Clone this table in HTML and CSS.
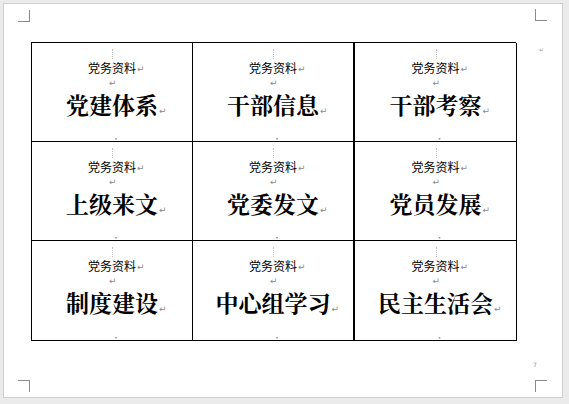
FILE: index.html
```html
<!DOCTYPE html>
<html lang="zh">
<head>
<meta charset="utf-8">
<title>党务资料</title>
<link rel="stylesheet" href="styles.css">
</head>
<body>
<div class="page">
  <span class="crop crop-tl"></span>
  <span class="crop crop-tr"></span>
  <span class="crop crop-bl"></span>
  <span class="crop crop-br"></span>
  <span class="side-mark">·↵</span>
  <span class="page-num">7</span>
  <div class="grid">
    <div class="cell c1"><span class="dots"></span><p class="sub"><span class="t">党务资料<i class="pm">↵</i></span></p><p class="blank"><span class="t"><i class="pm">↵</i></span></p><p class="title"><span class="t">党建体系<i class="pm">↵</i></span></p><span class="end">·</span></div>
    <div class="cell c2"><span class="dots"></span><p class="sub"><span class="t">党务资料<i class="pm">↵</i></span></p><p class="blank"><span class="t"><i class="pm">↵</i></span></p><p class="title"><span class="t">干部信息<i class="pm">↵</i></span></p><span class="end">·</span></div>
    <div class="cell c3"><span class="dots"></span><p class="sub"><span class="t">党务资料<i class="pm">↵</i></span></p><p class="blank"><span class="t"><i class="pm">↵</i></span></p><p class="title"><span class="t">干部考察<i class="pm">↵</i></span></p><span class="end">·</span></div>
    <div class="cell c1"><span class="dots"></span><p class="sub"><span class="t">党务资料<i class="pm">↵</i></span></p><p class="blank"><span class="t"><i class="pm">↵</i></span></p><p class="title"><span class="t">上级来文<i class="pm">↵</i></span></p><span class="end">·</span></div>
    <div class="cell c2"><span class="dots"></span><p class="sub"><span class="t">党务资料<i class="pm">↵</i></span></p><p class="blank"><span class="t"><i class="pm">↵</i></span></p><p class="title"><span class="t">党委发文<i class="pm">↵</i></span></p><span class="end">·</span></div>
    <div class="cell c3"><span class="dots"></span><p class="sub"><span class="t">党务资料<i class="pm">↵</i></span></p><p class="blank"><span class="t"><i class="pm">↵</i></span></p><p class="title"><span class="t">党员发展<i class="pm">↵</i></span></p><span class="end">·</span></div>
    <div class="cell c1 last"><span class="dots"></span><p class="sub"><span class="t">党务资料<i class="pm">↵</i></span></p><p class="blank"><span class="t"><i class="pm">↵</i></span></p><p class="title"><span class="t">制度建设<i class="pm">↵</i></span></p><span class="end">·</span></div>
    <div class="cell c2 last"><span class="dots"></span><p class="sub"><span class="t">党务资料<i class="pm">↵</i></span></p><p class="blank"><span class="t"><i class="pm">↵</i></span></p><p class="title"><span class="t">中心组学习<i class="pm">↵</i></span></p><span class="end">·</span></div>
    <div class="cell c3 last"><span class="dots"></span><p class="sub"><span class="t">党务资料<i class="pm">↵</i></span></p><p class="blank"><span class="t"><i class="pm">↵</i></span></p><p class="title"><span class="t">民主生活会<i class="pm">↵</i></span></p><span class="end">·</span></div>
  </div>
</div>
</body>
</html>
```

FILE: styles.css
```css
* { box-sizing: border-box; }
html, body { margin: 0; padding: 0; }
body {
  background: #ebebeb;
  width: 569px;
  height: 404px;
  padding: 3px 0 0 3px;
  font-family: "Noto Sans CJK SC", "DejaVu Sans", sans-serif;
  overflow: hidden;
}
.page {
  position: relative;
  width: 560px;
  height: 395px;
  background: #ffffff;
  border: 1px solid #cfcfcf;
  padding: 38px 0 0 27px;
}
.crop { position: absolute; width: 12px; height: 12px; }
.crop-tl { left: 14px; top: 6px; border-right: 1px solid #8a8a8a; border-bottom: 1px solid #8a8a8a; }
.crop-tr { left: 531px; top: 5px; border-left: 1px solid #8a8a8a; border-bottom: 1px solid #8a8a8a; }
.crop-bl { left: 14px; top: 376px; border-right: 1px solid #8a8a8a; border-top: 1px solid #8a8a8a; }
.crop-br { left: 531px; top: 376px; border-left: 1px solid #8a8a8a; border-top: 1px solid #8a8a8a; }
.side-mark {
  position: absolute; left: 533px; top: 42px;
  font-family: "DejaVu Sans", sans-serif; font-size: 6px; color: #a0a0a0;
}
.page-num {
  position: absolute; left: 529px; top: 357px;
  font-family: "DejaVu Sans", sans-serif; font-size: 6px; color: #909090;
}
.grid {
  display: grid;
  grid-template-columns: 161px 162px 162px;
  grid-template-rows: 99px 99px 100px;
  width: 485px;
  border-top: 1px solid #000;
  border-left: 1px solid #000;
}
.cell {
  position: relative;
  border-right: 1px solid #000;
  border-bottom: 1px solid #000;
  display: flex;
  flex-direction: column;
  padding-top: 18px;
}
.cell.c2 { border-right: 2px solid #000; }
.cell p { margin: 0; text-align: center; }
.t { position: relative; display: inline-block; }
.sub { height: 14px; font-size: 12px; line-height: 14px; color: #000; }
.blank { height: 12px; line-height: 12px; }
.title {
  height: 36px;
  line-height: 36px;
  font-family: "Noto Serif CJK SC", "Noto Sans CJK SC", serif;
  font-weight: 700;
  font-size: 23px;
  color: #000;
}
.pm {
  position: absolute;
  left: 100%;
  bottom: 0;
  font-style: normal;
  font-weight: 400;
  font-family: "DejaVu Sans", sans-serif;
  font-size: 9px;
  line-height: 10px;
  color: #8a8a8a;
  margin-left: 1px;
}
.sub .pm { bottom: 1px; }
.blank .t { width: 0; height: 12px; }
.blank .pm { left: -4px; }
.title .pm { bottom: 7px; }
.dots {
  position: absolute;
  left: 50%;
  top: 6px;
  width: 1px;
  height: 10px;
  border-left: 1px dotted #c0c0c0;
}
.end {
  position: absolute;
  left: 50%;
  bottom: -2px;
  font-size: 8px;
  line-height: 8px;
  color: #8a8a8a;
}
```
